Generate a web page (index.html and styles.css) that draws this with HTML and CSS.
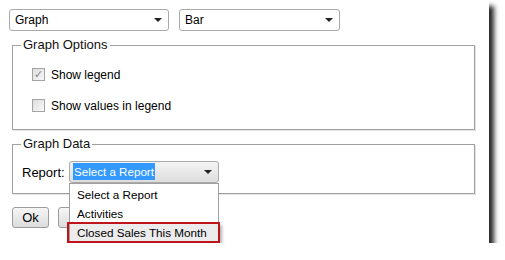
FILE: index.html
```html
<!DOCTYPE html>
<html lang="en">
<head>
    <meta charset="UTF-8">
    <title>Graph settings</title>
    <link rel="stylesheet" href="styles.css">
</head>
<body>
    <div class="window">
        <div class="top-row">
            <div class="combo combo-graph">Graph<span class="arrow"></span></div>
            <div class="combo combo-type">Bar<span class="arrow"></span></div>
        </div>

        <fieldset class="group">
            <legend>Graph Options</legend>
            <div class="group-options">
                <label class="check-row"><span class="box checked">&#10003;</span>Show legend</label>
                <label class="check-row"><span class="box"></span>Show values in legend</label>
            </div>
        </fieldset>

        <fieldset class="group">
            <legend>Graph Data</legend>
            <div class="group-data">
                <span class="report-label">Report:</span>
                <div class="report-select">
                    <div class="combo combo-report"><span class="picked">Select a Report</span><span class="arrow"></span></div>
                    <ul class="drop-list">
                        <li>Select a Report</li>
                        <li>Activities</li>
                        <li class="marked">Closed Sales This Month</li>
                    </ul>
                </div>
            </div>
        </fieldset>

        <div class="buttons">
            <button class="btn btn-ok">Ok</button>
            <!-- cancel button sits under the open list -->
            <button class="btn btn-cancel" aria-label="Cancel"></button>
        </div>
    </div>
</body>
</html>
```

FILE: styles.css
```css
* {
    margin: 0;
    padding: 0;
    box-sizing: border-box;
}
body {
    background: #fff;
    font-family: "Liberation Sans", Arial, sans-serif;
    font-size: 12px;
    color: #000;
}
ul, li {
    list-style-type: none;
}

.window {
    width: 489px;
    height: 243px;
    background: #fff;
    padding: 9px 0 0 9px;
    box-shadow: 5px 6px 5px rgba(0, 0, 0, 0.85);
}

/* dropdown boxes */
.top-row {
    display: flex;
    gap: 10px;
}
.combo {
    position: relative;
    height: 22px;
    line-height: 20px;
    border: 1px solid #a9a9a9;
    border-radius: 3px;
    background: #fff;
    padding-left: 5px;
    font-size: 12px;
}
.combo-graph {
    width: 160px;
}
.combo-type {
    width: 161px;
}
.arrow {
    position: absolute;
    right: 6px;
    top: 8px;
    border-left: 4px solid transparent;
    border-right: 4px solid transparent;
    border-top: 4px solid #222;
}

/* group boxes */
.group {
    margin: 6px 0 0 3px;
    width: 463px;
    border: 1px solid #a0a0a0;
    box-shadow: 1px 1px 0 #e4e4e4;
}
.group legend {
    margin-left: 8px;
    padding: 0 2px;
    font-size: 13px;
    line-height: 16px;
    color: #111;
}
.group-options {
    padding: 6px 0 8px 19px;
}
.check-row {
    display: flex;
    align-items: center;
    height: 31px;
    font-size: 12px;
}
.box {
    width: 13px;
    height: 13px;
    margin-right: 6px;
    border: 1px solid #a4a4a4;
    background: linear-gradient(135deg, #dedede, #f8f8f8);
    font-size: 11px;
    line-height: 11px;
    text-align: center;
    color: #888;
}

.group-data {
    display: flex;
    align-items: center;
    padding: 9px 0 10px 9px;
}
.report-label {
    width: 47px;
    font-size: 13px;
}
.report-select {
    position: relative;
    width: 150px;
}
.combo-report {
    padding-left: 3px;
    line-height: 18px;
    padding-top: 1px;
    background: linear-gradient(#f4f4f4, #dddddd);
}
.picked {
    display: inline-block;
    background: #3399ff;
    color: #fff;
    padding: 0 1px;
    line-height: 17px;
    font-size: 11.6px;
}
.drop-list {
    position: absolute;
    left: 0;
    top: 22px;
    width: 150px;
    height: 60px;
    padding-top: 1px;
    background: #fff;
    border: 1px solid #a0a0a0;
    border-bottom: none;
    z-index: 2;
}
.drop-list li {
    height: 19px;
    line-height: 19px;
    padding-left: 7px;
    font-size: 11.7px;
}
.drop-list .marked {
    position: relative;
    background: #ececec;
}
.drop-list .marked:after {
    content: '';
    position: absolute;
    left: -3px;
    right: -2px;
    top: -1px;
    bottom: -1px;
    border: 2px solid #c0141c;
    box-shadow: 2px 3px 3px rgba(0, 0, 0, 0.3);
}

/* buttons */
.buttons {
    display: flex;
    gap: 9px;
    margin: 13px 0 0 3px;
}
.btn {
    height: 21px;
    padding: 0 9px;
    border: 1px solid #9c9c9c;
    border-radius: 3px;
    background: linear-gradient(#f6f6f6, #dcdcdc);
    font-family: "Liberation Sans", Arial, sans-serif;
    font-size: 13px;
    color: #000;
}
.btn-ok {
    width: 37px;
}
.btn-cancel {
    width: 54px;
}
```
